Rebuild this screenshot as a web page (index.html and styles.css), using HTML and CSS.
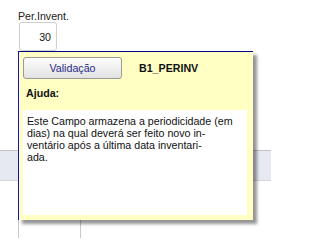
FILE: index.html
```html
<!DOCTYPE html>
<html>
<head>
<meta charset="utf-8">
<link rel="stylesheet" href="styles.css">
</head>
<body>
<div class="field">
  <div class="lbl">Per.Invent.</div>
  <div class="inp">30</div>
</div>
<div class="grid">
  <div class="row-hl"></div>
  <div class="row">
    <div class="cell c0"></div>
    <div class="cell c1"></div>
    <div class="cell c2"></div>
  </div>
</div>
<div class="tip">
  <div class="tip-head">
    <div class="btn">Validação</div>
    <div class="fld">B1_PERINV</div>
  </div>
  <div class="ajuda">Ajuda:</div>
  <div class="txt">Este Campo armazena a periodicidade (em<br>dias) na qual deverá ser feito novo in-<br>ventário após a última data inventari-<br>ada.</div>
</div>
</body>
</html>
```
FILE: styles.css
```css
html, body {
  margin: 0;
  padding: 0;
  background: #ffffff;
  width: 271px;
  height: 238px;
  overflow: hidden;
  position: relative;
  font-family: "Liberation Sans", Arial, sans-serif;
  font-size: 10.67px;
  line-height: 12px;
  color: #000;
}
.field {
  padding: 10px 0 0 18px;
}
.lbl {
  height: 12px;
  color: #222;
}
.inp {
  box-sizing: border-box;
  margin-left: 1px;
  width: 38px;
  height: 29px;
  border: 1px solid #cfcfcf;
  border-radius: 3px;
  display: flex;
  align-items: center;
  justify-content: flex-end;
  padding-right: 5px;
  color: #111;
}
.grid {
  margin-top: 99px;
}
.row-hl {
  height: 29px;
  background: #e6e9f1;
  border-top: 1px solid #c4c4c4;
  border-bottom: 1px solid #d6d6d6;
}
.row {
  display: flex;
  height: 60px;
}
.cell {
  height: 100%;
}
.c0 { width: 18px; }
.c1 { width: 62px; border-left: 1px solid #c8c8c8; box-sizing: border-box; }
.c2 { flex: 1; border-left: 1px solid #c8c8c8; }
.tip {
  position: absolute;
  left: 18px;
  top: 51px;
  box-sizing: border-box;
  width: 235px;
  height: 169px;
  background: #ffffc4;
  border-top: 1px solid #000080;
  border-left: 1px solid #1010c8;
  padding: 5px 6px 5px 4px;
  display: flex;
  flex-direction: column;
  box-shadow: 4px 4px 3px rgba(0, 0, 0, 0.42);
}
.tip-head {
  display: flex;
  align-items: center;
  height: 22px;
}
.btn {
  box-sizing: border-box;
  width: 99px;
  height: 22px;
  border: 1px solid #9a9a9a;
  border-radius: 3px;
  background: linear-gradient(#fdfdfd, #e2e2e2);
  color: #2a2a8a;
  display: flex;
  align-items: center;
  justify-content: center;
}
.fld {
  margin-left: 17px;
  font-weight: bold;
  color: #111;
}
.ajuda {
  margin-top: 8px;
  padding-left: 3px;
  font-weight: bold;
  color: #111;
}
.txt {
  margin-top: 11px;
  flex: 1;
  background: #ffffff;
  padding: 5px 4px 0 4px;
  color: #111;
}
```
